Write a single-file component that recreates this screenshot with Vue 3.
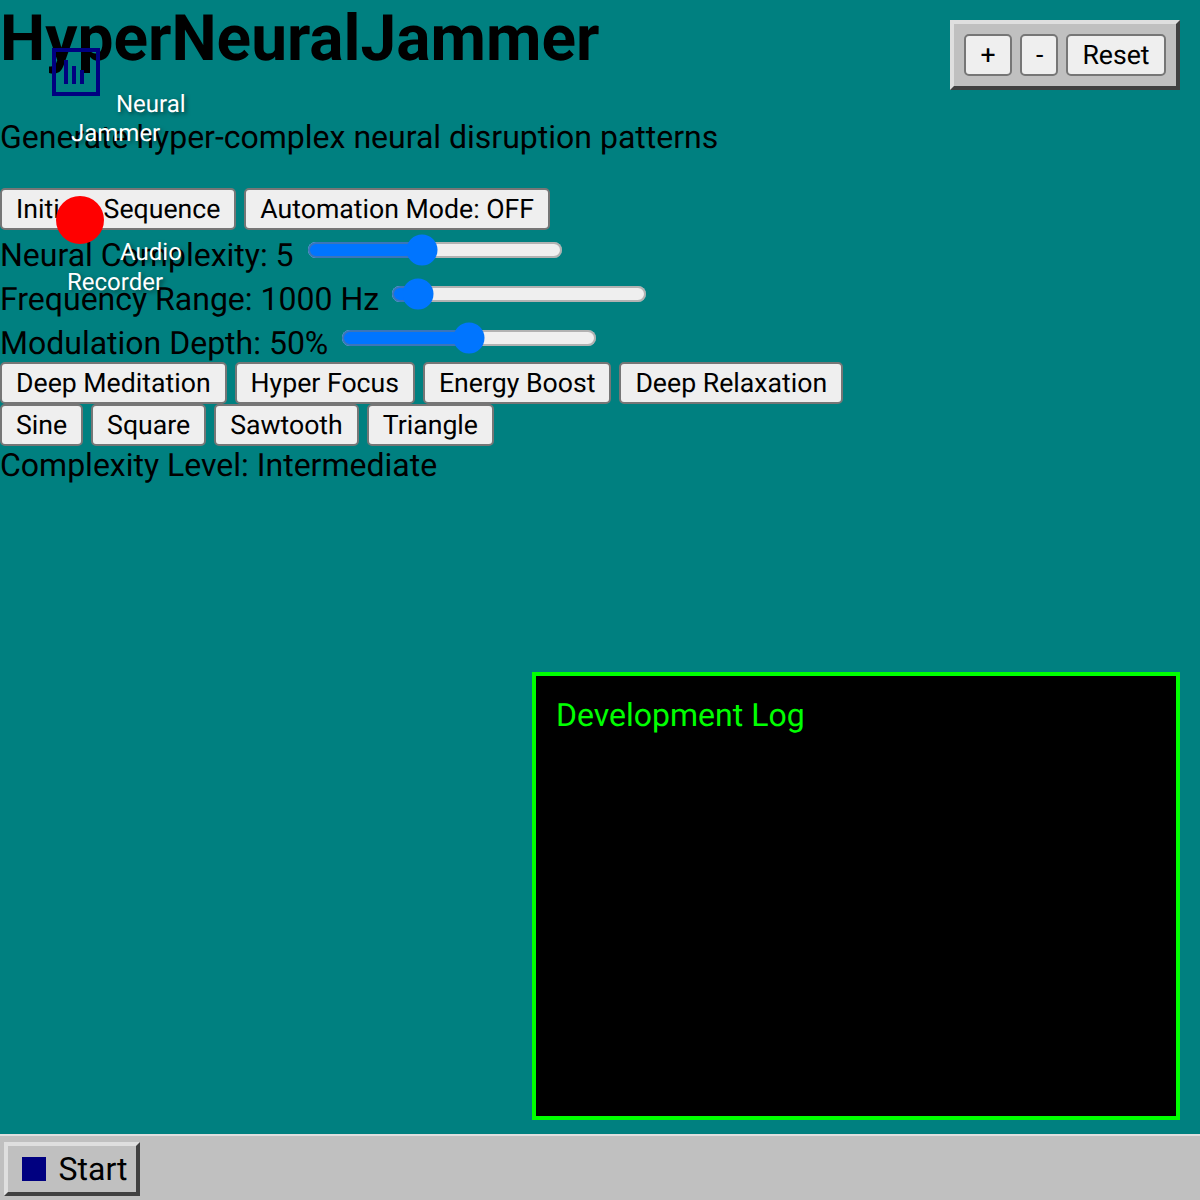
<script setup>
const sliders = [
  { label: 'Neural Complexity: 5', min: 1, max: 10, value: 5, nudge: 0.5 },
  { label: 'Frequency Range: 1000 Hz', min: 20, max: 20000, value: 1000, nudge: 0 },
  { label: 'Modulation Depth: 50%', min: 0, max: 100, value: 50, nudge: 0.5 },
]
const presets = ['Deep Meditation', 'Hyper Focus', 'Energy Boost', 'Deep Relaxation']
const waves = ['Sine', 'Square', 'Sawtooth', 'Triangle']
</script>

<template>
  <div class="desktop">
    <main class="content">
      <h1>HyperNeuralJammer</h1>
      <p>Generate hyper-complex neural disruption patterns</p>
      <div class="row">
        <button>Initiate Sequence</button>
        {{ ' ' }}
        <button>Automation Mode: OFF</button>
      </div>
      <div v-for="s in sliders" :key="s.label" class="row">
        <label>{{ s.label }}</label>
        {{ ' ' }}
        <input type="range" :min="s.min" :max="s.max" :value="s.value" :style="{ marginLeft: 2 + s.nudge + 'px' }" />
      </div>
      <div class="row">
        <template v-for="p in presets" :key="p"><button>{{ p }}</button>{{ ' ' }}</template>
      </div>
      <div class="row">
        <template v-for="w in waves" :key="w"><button>{{ w }}</button>{{ ' ' }}</template>
      </div>
      <div class="level">Complexity Level: Intermediate</div>
    </main>

    <div class="app-icon neural">
      <svg class="glyph" viewBox="0 0 24 24" width="24" height="24">
        <rect x="1" y="1" width="22" height="22" fill="none" stroke="#000080" stroke-width="2" />
        <rect x="6" y="6" width="2" height="12" fill="#000080" />
        <rect x="10" y="9" width="2" height="9" fill="#000080" />
        <rect x="14" y="11" width="2" height="7" fill="#000080" />
      </svg>
      <span class="line first">Neural</span>
      <span class="line second">Jammer</span>
    </div>

    <div class="app-icon audio">
      <div class="dot"></div>
      <span class="line first">Audio</span>
      <span class="line second">Recorder</span>
    </div>

    <div class="zoom-panel">
      <button>+</button>
      <button>-</button>
      <button>Reset</button>
    </div>

    <section class="log">Development Log</section>

    <footer class="taskbar">
      <div class="start">
        <span class="logo"></span>
        <span>Start</span>
      </div>
    </footer>
  </div>
</template>

<style>
html, body { margin: 0; background: #008080; }
</style>

<style scoped>
.desktop {
  zoom: 2;
  position: relative;
  width: 600px;
  height: 600px;
  overflow: hidden;
  display: flex;
  flex-direction: column;
  background: #008080;
  color: #000;
  font-family: Roboto, sans-serif;
  font-size: 16px;
  text-rendering: geometricPrecision;
}
.content { flex: 1; min-height: 0; }
h1 { margin: 0 0 21px; padding-top: 0.5px; font-size: 32px; font-weight: 700; }
p { margin: 0 0 16px; }
button {
  box-sizing: border-box;
  height: 21px;
  padding: 0 6px 0.5px;
  font-family: Roboto, sans-serif;
  text-rendering: geometricPrecision;
  vertical-align: top;
}
input[type="range"] { width: 128px; }
.app-icon {
  position: absolute;
  left: 26px;
  width: 80px;
  display: flex;
  flex-direction: column;
  color: #fff;
  font-size: 12px;
  text-shadow: 1px 1px 2px rgba(0, 0, 0, 0.5);
}
.app-icon.neural { top: 24px; }
.app-icon.audio { top: 98px; }
.glyph { display: block; margin-bottom: -3px; }
.dot {
  width: 24px;
  height: 24px;
  margin: 0 0 -3px 2px;
  border-radius: 50%;
  background: #f00;
}
.line { display: block; white-space: nowrap; line-height: 14.7px; }
.neural .first { margin-left: 32px; }
.neural .second { margin-left: 9.5px; }
.audio .first { margin-left: 34px; }
.audio .second { margin: 0.5px 0 0 7.5px; }
.zoom-panel {
  position: absolute;
  top: 10px;
  right: 10px;
  display: grid;
  grid-template-columns: 24px 19px 50px;
  gap: 4px;
  padding: 5px;
  background: #c0c0c0;
  border: 2px solid;
  border-color: #dfdfdf #404040 #404040 #dfdfdf;
}
.log {
  position: absolute;
  right: 10px;
  bottom: 40px;
  box-sizing: border-box;
  width: 324px;
  height: 224px;
  padding: 10px;
  background: #000;
  border: 2px solid #0f0;
  color: #0f0;
}
.taskbar {
  flex: none;
  box-sizing: border-box;
  height: 33px;
  padding: 3px 2px 0;
  background: #c0c0c0;
  border-top: 1px solid #dfdfdf;
}
.start {
  box-sizing: border-box;
  display: inline-flex;
  align-items: center;
  gap: 6.25px;
  width: 68px;
  height: 27px;
  padding: 0 5px 0 7px;
  background: #c0c0c0;
  border: 2px solid;
  border-color: #dfdfdf #404040 #404040 #dfdfdf;
}
.logo { flex: none; width: 12px; height: 12px; background: #000080; }
</style>
